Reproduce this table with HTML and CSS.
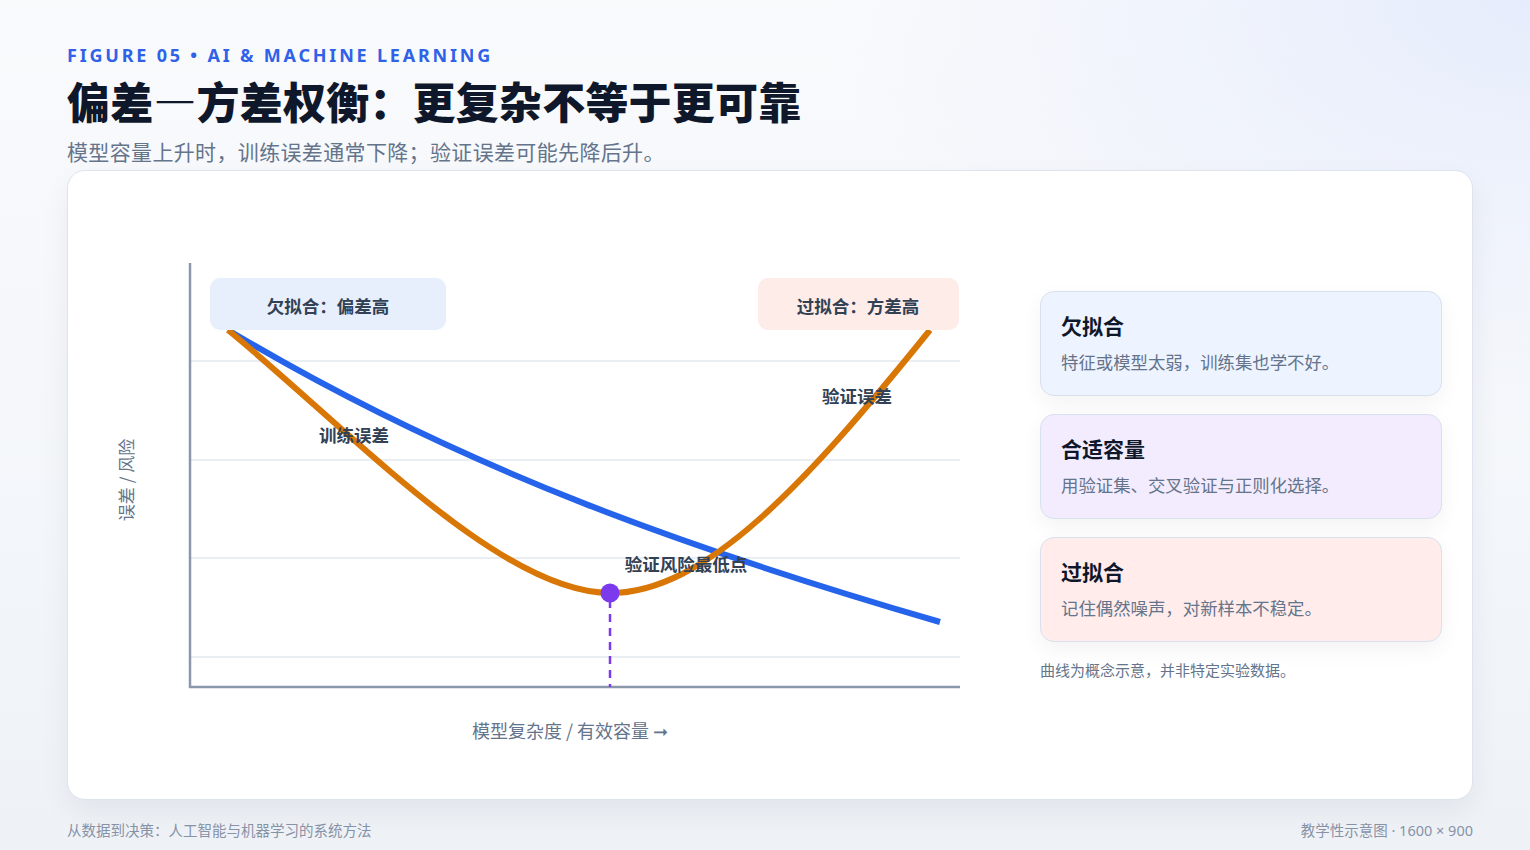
FILE: index.html
```html
<!DOCTYPE html>
<html lang="zh-CN">
<head>
<meta charset="utf-8">
<title>偏差—方差权衡</title>
<link rel="stylesheet" href="styles.css">
</head>
<body>
<div class="page">
  <div class="eyebrow">FIGURE 05 • AI &amp; MACHINE LEARNING</div>
  <h1 class="title">偏差—方差权衡：更复杂不等于更可靠</h1>
  <p class="subtitle">模型容量上升时，训练误差通常下降；验证误差可能先降后升。</p>
  <div class="card">
    <svg class="chart" width="950" height="628" viewBox="68 171 950 628" xmlns="http://www.w3.org/2000/svg">
      <g class="grid">
        <line x1="190" y1="361" x2="960" y2="361"/>
        <line x1="190" y1="460" x2="960" y2="460"/>
        <line x1="190" y1="558" x2="960" y2="558"/>
        <line x1="190" y1="657" x2="960" y2="657"/>
      </g>
      <line class="axis" x1="190" y1="263" x2="190" y2="688"/>
      <line class="axis" x1="189" y1="687" x2="960" y2="687"/>
      <path class="curve blue" d="M228 330 C465 472, 703 553, 940 622"/>
      <path class="curve orange" d="M228 330 C350 430, 500 593, 610 593 C705 593, 805 485, 930 330"/>
      <line class="dash" x1="610" y1="600" x2="610" y2="687"/>
      <circle class="dot" cx="610" cy="593" r="9.5"/>
      <rect class="tag tag-blue" x="210" y="278" width="236" height="52" rx="10"/>
      <rect class="tag tag-red" x="758" y="278" width="201" height="52" rx="10"/>
      <text class="tag-text" x="328" y="305">欠拟合：偏差高</text>
      <text class="tag-text" x="858" y="305">过拟合：方差高</text>
      <text class="lbl" x="354" y="434">训练误差</text>
      <text class="lbl" x="857" y="395">验证误差</text>
      <text class="lbl" x="686" y="563">验证风险最低点</text>
      <text class="axis-label x-label" x="570" y="730">模型复杂度 / 有效容量 ➞</text>
      <text class="axis-label" transform="translate(125 480) rotate(-90)" x="0" y="0">误差 / 风险</text>
    </svg>
    <div class="side">
      <div class="note-card under">
        <div class="nc-title">欠拟合</div>
        <div class="nc-body">特征或模型太弱，训练集也学不好。</div>
      </div>
      <div class="note-card fit">
        <div class="nc-title">合适容量</div>
        <div class="nc-body">用验证集、交叉验证与正则化选择。</div>
      </div>
      <div class="note-card over">
        <div class="nc-title">过拟合</div>
        <div class="nc-body">记住偶然噪声，对新样本不稳定。</div>
      </div>
      <div class="side-note">曲线为概念示意，并非特定实验数据。</div>
    </div>
  </div>
  <div class="footer">
    <span>从数据到决策：人工智能与机器学习的系统方法</span>
    <span>教学性示意图 · 1600 × 900</span>
  </div>
</div>
</body>
</html>
```
FILE: styles.css
```css
html, body {
  margin: 0;
  padding: 0;
}
body {
  width: 1530px;
  height: 850px;
  overflow: hidden;
  font-family: "Noto Sans", "Noto Sans CJK SC", sans-serif;
  color: #0f172a;
  background:
    radial-gradient(ellipse 700px 420px at 100% 0%, #e6ecfc 0%, rgba(230,236,252,0.5) 45%, rgba(230,236,252,0) 100%),
    linear-gradient(180deg, #f9fafc 0%, #f3f6fa 60%, #eef2f7 100%);
}
.page {
  padding: 43px 57px 0 67px;
}
.eyebrow {
  font-size: 18px;
  line-height: 24px;
  font-weight: 700;
  letter-spacing: 2.8px;
  color: #2f62e8;
}
.title {
  margin: 5px 0 0;
  font-family: "Noto Sans CJK SC", sans-serif;
  font-size: 43px;
  line-height: 56px;
  font-weight: 900;
  color: #0f172a;
  letter-spacing: 0.2px;
}
.subtitle {
  margin: 9px 0 0;
  font-family: "Noto Sans CJK SC", sans-serif;
  font-size: 21px;
  line-height: 28px;
  letter-spacing: 0.35px;
  color: #64748b;
}
.card {
  margin-top: 5px;
  box-sizing: border-box;
  height: 630px;
  background: #fff;
  border: 1px solid #dde4ee;
  border-radius: 18px;
  box-shadow: 0 12px 30px rgba(15, 23, 42, 0.06);
  display: flex;
  align-items: center;
}
.chart {
  display: block;
  flex: none;
  font-family: "Noto Sans CJK SC", sans-serif;
}
.grid line {
  stroke: #e2e8f0;
  stroke-width: 1.5;
}
.axis {
  stroke: #8b97ab;
  stroke-width: 2.5;
}
.curve {
  fill: none;
  stroke-width: 6;
  stroke-linecap: butt;
  stroke-linejoin: round;
}
.blue { stroke: #2563eb; }
.orange { stroke: #d97706; }
.dash {
  stroke: #7c3aed;
  stroke-width: 2.5;
  stroke-dasharray: 8 6;
}
.dot { fill: #7c3aed; }
.tag-blue { fill: #e7effd; }
.tag-red { fill: #feece9; }
.tag-text, .lbl {
  font-size: 17.5px;
  font-weight: 700;
  fill: #334155;
  text-anchor: middle;
  dominant-baseline: central;
}
.axis-label {
  font-size: 17px;
  fill: #64748b;
  text-anchor: middle;
  dominant-baseline: central;
}
.x-label {
  font-size: 18px;
}
.side {
  margin-left: 22px;
  width: 402px;
  display: flex;
  flex-direction: column;
  gap: 18px;
}
.note-card {
  box-sizing: border-box;
  height: 105px;
  padding: 19px 20px 0;
  border: 1px solid #d8e1ee;
  border-radius: 14px;
  box-shadow: 0 8px 22px rgba(15, 23, 42, 0.05);
  font-family: "Noto Sans CJK SC", sans-serif;
}
.under { background: #edf3ff; }
.fit { background: #f3ecfe; }
.over { background: #ffeceb; }
.nc-title {
  font-size: 21px;
  line-height: 28px;
  font-weight: 700;
  color: #0f172a;
}
.nc-body {
  margin-top: 11px;
  font-size: 17.4px;
  line-height: 24px;
  color: #64748b;
}
.side-note {
  margin-top: 0;
  font-family: "Noto Sans CJK SC", sans-serif;
  font-size: 15px;
  line-height: 20px;
  color: #64748b;
}
.footer {
  margin-top: 20px;
  display: flex;
  justify-content: space-between;
  font-size: 14.5px;
  line-height: 20px;
  color: #8792a6;
}
```
